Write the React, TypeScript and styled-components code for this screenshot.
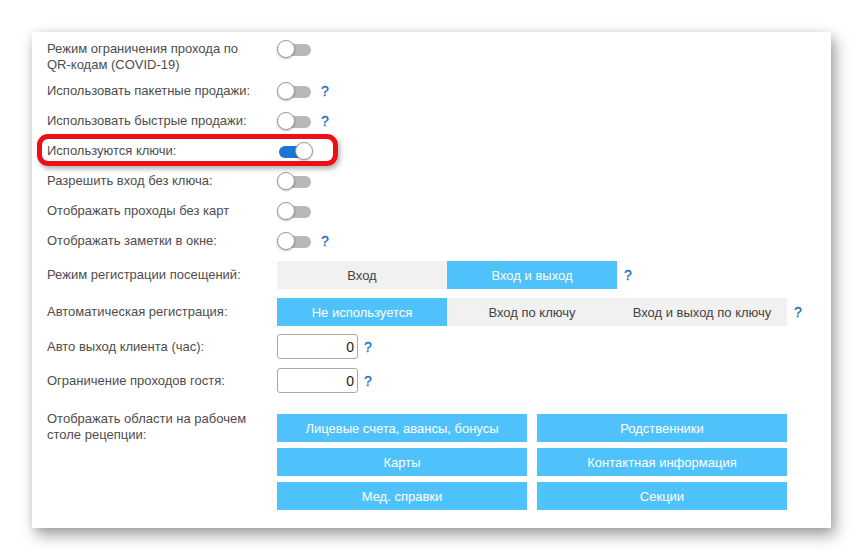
import React from 'react';
import styled, { createGlobalStyle } from 'styled-components';

const GlobalStyle = createGlobalStyle`
  html, body {
    margin: 0;
    padding: 0;
    background: #fff;
  }
  body {
    font-family: "Liberation Sans", Arial, sans-serif;
    font-size: 13px;
    color: #4d4d4d;
  }
`;

const Card = styled.div`
  margin: 32px;
  width: 769px;
  padding: 9px 15px 18px;
  background: #fff;
  box-shadow: 4px 7px 14px rgba(0, 0, 0, 0.38), 0 0 8px rgba(0, 0, 0, 0.07);
  display: flex;
  flex-direction: column;
`;

const Row = styled.div<{ $h?: number; $mt?: number; $top?: boolean }>`
  position: relative;
  display: flex;
  align-items: ${(p) => (p.$top ? 'flex-start' : 'center')};
  min-height: ${(p) => p.$h ?? 30}px;
  margin-top: ${(p) => p.$mt ?? 0}px;
`;

const Label = styled.div<{ $shift?: number }>`
  width: 230px;
  flex: none;
  line-height: 16px;
  margin-top: ${(p) => p.$shift ?? 0}px;
`;

const Controls = styled.div`
  display: flex;
  align-items: center;
`;

const Help = styled.span<{ $gap?: number }>`
  margin-left: ${(p) => p.$gap ?? 8}px;
  color: #1a6fb8;
  font-size: 14px;
  -webkit-text-stroke: 0.3px #1a6fb8;
  cursor: help;
`;

const SwitchBox = styled.span`
  position: relative;
  display: inline-block;
  width: 36px;
  height: 16px;
  flex: none;
`;

const Track = styled.span<{ $on: boolean }>`
  position: absolute;
  left: 2px;
  top: 3px;
  width: 32px;
  height: 12px;
  border-radius: 6px;
  background: ${(p) => (p.$on ? '#1976d2' : '#b8b8b8')};
`;

const Knob = styled.span<{ $on: boolean }>`
  position: absolute;
  top: -1px;
  left: ${(p) => (p.$on ? 18 : 0)}px;
  width: 16px;
  height: 16px;
  border-radius: 50%;
  background: #fff;
  border: 1px solid #9a9a9a;
  box-shadow: 0 1px 2px rgba(0, 0, 0, 0.25);
`;

const Switch = ({ on = false }: { on?: boolean }) => (
  <SwitchBox>
    <Track $on={on} />
    <Knob $on={on} />
  </SwitchBox>
);

const Segments = styled.div`
  display: flex;
`;

const Segment = styled.div<{ $active?: boolean }>`
  width: 170px;
  height: 28px;
  display: flex;
  align-items: center;
  justify-content: center;
  background: ${(p) => (p.$active ? '#4fc2fb' : '#f1f1f1')};
  color: ${(p) => (p.$active ? '#fff' : '#444')};
  font-size: 13px;
`;

const NumberInput = styled.div`
  box-sizing: border-box;
  width: 81px;
  height: 25px;
  border: 1px solid #a9a9a9;
  border-radius: 3px;
  display: flex;
  align-items: center;
  justify-content: flex-end;
  padding-right: 3px;
  color: #222;
  font-size: 14px;
`;

const AreaGrid = styled.div`
  display: grid;
  grid-template-columns: 250px 250px;
  column-gap: 10px;
  row-gap: 6px;
`;

const AreaButton = styled.div`
  height: 28px;
  display: flex;
  align-items: center;
  justify-content: center;
  background: #4fc2fb;
  color: #fff;
  font-size: 13px;
`;

const Highlight = styled.span`
  position: absolute;
  left: -10px;
  top: -2px;
  width: 301px;
  height: 32px;
  box-sizing: border-box;
  border: 5px solid #ec0f16;
  border-radius: 11px;
  box-shadow: 2px 3px 5px rgba(0, 0, 0, 0.3);
  pointer-events: none;
`;

const toggles: { label: string; on?: boolean; help?: boolean; mark?: boolean }[] = [
  { label: 'Использовать пакетные продажи:', help: true },
  { label: 'Использовать быстрые продажи:', help: true },
  { label: 'Используются ключи:', on: true, mark: true },
  { label: 'Разрешить вход без ключа:' },
  { label: 'Отображать проходы без карт' },
  { label: 'Отображать заметки в окне:', help: true },
];

const areas = [
  'Лицевые счета, авансы, бонусы',
  'Родственники',
  'Карты',
  'Контактная информация',
  'Мед. справки',
  'Секции',
];

export default function App() {
  return (
    <>
      <GlobalStyle />
      <Card>
        <Row $h={35} $top>
          <Label>
            Режим ограничения прохода по
            <br />
            QR-кодам (COVID-19)
          </Label>
          <Controls>
            <Switch />
          </Controls>
        </Row>

        {toggles.map((t) => (
          <Row key={t.label}>
            {t.mark && <Highlight />}
            <Label>{t.label}</Label>
            <Controls>
              <Switch on={t.on} />
              {t.help && <Help>?</Help>}
            </Controls>
          </Row>
        ))}

        <Row $h={28} $mt={5}>
          <Label>Режим регистрации посещений:</Label>
          <Controls>
            <Segments>
              <Segment>Вход</Segment>
              <Segment $active>Вход и выход</Segment>
            </Segments>
            <Help $gap={7}>?</Help>
          </Controls>
        </Row>

        <Row $h={28} $mt={9}>
          <Label>Автоматическая регистрация:</Label>
          <Controls>
            <Segments>
              <Segment $active>Не используется</Segment>
              <Segment>Вход по ключу</Segment>
              <Segment>Вход и выход по ключу</Segment>
            </Segments>
            <Help $gap={7}>?</Help>
          </Controls>
        </Row>

        <Row $h={25} $mt={8}>
          <Label>Авто выход клиента (час):</Label>
          <Controls>
            <NumberInput>0</NumberInput>
            <Help $gap={6}>?</Help>
          </Controls>
        </Row>

        <Row $h={25} $mt={9}>
          <Label>Ограничение проходов гостя:</Label>
          <Controls>
            <NumberInput>0</NumberInput>
            <Help $gap={6}>?</Help>
          </Controls>
        </Row>

        <Row $top $mt={21}>
          <Label $shift={-3}>
            Отображать области на рабочем
            <br />
            столе рецепции:
          </Label>
          <AreaGrid>
            {areas.map((a) => (
              <AreaButton key={a}>{a}</AreaButton>
            ))}
          </AreaGrid>
        </Row>
      </Card>
    </>
  );
}
